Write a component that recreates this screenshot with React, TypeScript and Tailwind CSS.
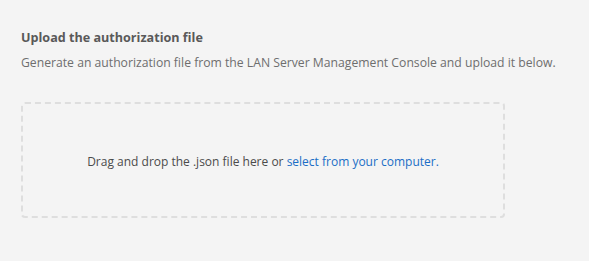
export default function App() {
  return (
    <div className="w-[589px] h-[261px] bg-[#f4f4f4] pl-[21px] pt-[29px] font-['Open_Sans',sans-serif]">
      <h2 className="text-[12.6px] leading-[18px] font-bold text-[#595959]">Upload the authorization file</h2>
      <p className="mt-[7px] text-[12.2px] leading-[18px] text-[#6e6e6e]">
        Generate an authorization file from the LAN Server Management Console and upload it below.
      </p>
      <div className="mt-[30px] w-[484px] h-[116px] border-2 border-dashed border-[#dedede] rounded-[4px] flex items-center justify-center">
        <p className="mt-[3px] text-[12px] text-[#4b4b4b]">
          Drag and drop the .json file here or{' '}
          <a href="#" className="text-[#1b6ec6]">select from your computer.</a>
        </p>
      </div>
    </div>
  );
}
